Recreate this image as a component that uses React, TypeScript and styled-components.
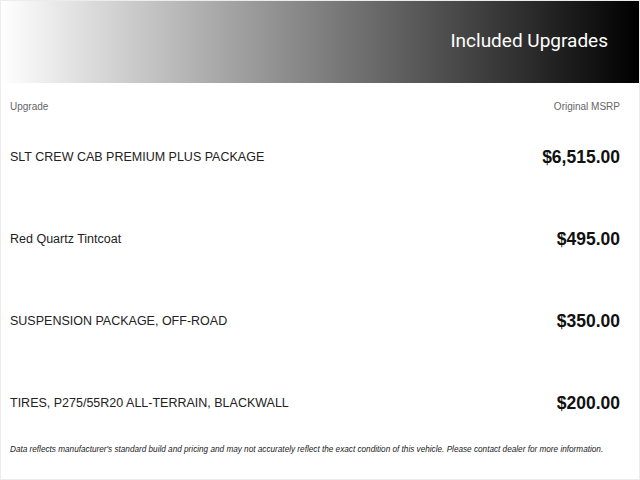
import styled, { createGlobalStyle } from 'styled-components';

const GlobalStyle = createGlobalStyle`
  html, body {
    margin: 0;
    padding: 0;
    background: #fff;
  }
  body {
    font-family: "Liberation Sans", Arial, sans-serif;
    color: #222;
  }
`;

const Panel = styled.div`
  width: 640px;
  height: 480px;
  box-sizing: border-box;
  border: 1px solid #ececec;
  display: flex;
  flex-direction: column;
`;

const Header = styled.div`
  height: 82px;
  box-sizing: border-box;
  padding: 0 31px 4px 0;
  display: flex;
  align-items: center;
  justify-content: flex-end;
  background: linear-gradient(to right, #ffffff 0%, #000000 100%);
`;

const Title = styled.h2`
  margin: 0;
  font-family: Roboto, "Liberation Sans", sans-serif;
  font-weight: 400;
  font-size: 19px;
  color: #fff;
`;

const Body = styled.div`
  padding: 0 19px 0 9px;
  display: flex;
  flex-direction: column;
`;

const LabelRow = styled.div`
  height: 33px;
  box-sizing: border-box;
  padding-top: 18px;
  display: flex;
  align-items: flex-start;
  justify-content: space-between;
  font-size: 10px;
  line-height: 12px;
  color: #666;
`;

const ItemRow = styled.div`
  height: 82px;
  display: flex;
  align-items: center;
  justify-content: space-between;
`;

const ItemName = styled.span`
  font-size: 12.5px;
  color: #222;
`;

const Price = styled.span`
  font-size: 17.5px;
  font-weight: 700;
  color: #111;
`;

const Disclaimer = styled.p`
  margin: 1px 0 0;
  padding: 0 9px;
  font-size: 8.2px;
  line-height: 10px;
  font-style: italic;
  color: #222;
`;

const upgrades = [
  { name: 'SLT CREW CAB PREMIUM PLUS PACKAGE', price: '$6,515.00' },
  { name: 'Red Quartz Tintcoat', price: '$495.00' },
  { name: 'SUSPENSION PACKAGE, OFF-ROAD', price: '$350.00' },
  { name: 'TIRES, P275/55R20 ALL-TERRAIN, BLACKWALL', price: '$200.00' },
];

export default function App() {
  return (
    <>
      <GlobalStyle />
      <Panel>
        <Header>
          <Title>Included Upgrades</Title>
        </Header>
        <Body>
          <LabelRow>
            <span>Upgrade</span>
            <span>Original MSRP</span>
          </LabelRow>
          {upgrades.map((u) => (
            <ItemRow key={u.name}>
              <ItemName>{u.name}</ItemName>
              <Price>{u.price}</Price>
            </ItemRow>
          ))}
        </Body>
        <Disclaimer>
          Data reflects manufacturer's standard build and pricing and may not accurately reflect the exact
          condition of this vehicle. Please contact dealer for more information.
        </Disclaimer>
      </Panel>
    </>
  );
}
